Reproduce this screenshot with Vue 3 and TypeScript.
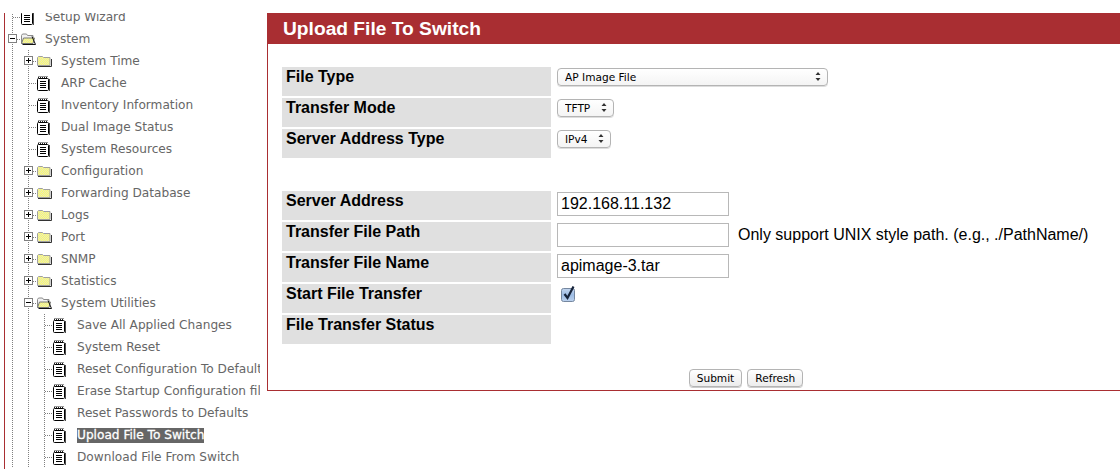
<script setup lang="ts">
interface Row { label: string; level: number; kind: 'open' | 'closed' | 'leaf'; active?: boolean }
const rows: Row[] = [
  { label: 'Setup Wizard', level: 0, kind: 'leaf' },
  { label: 'System', level: 0, kind: 'open' },
  { label: 'System Time', level: 1, kind: 'closed' },
  { label: 'ARP Cache', level: 1, kind: 'leaf' },
  { label: 'Inventory Information', level: 1, kind: 'leaf' },
  { label: 'Dual Image Status', level: 1, kind: 'leaf' },
  { label: 'System Resources', level: 1, kind: 'leaf' },
  { label: 'Configuration', level: 1, kind: 'closed' },
  { label: 'Forwarding Database', level: 1, kind: 'closed' },
  { label: 'Logs', level: 1, kind: 'closed' },
  { label: 'Port', level: 1, kind: 'closed' },
  { label: 'SNMP', level: 1, kind: 'closed' },
  { label: 'Statistics', level: 1, kind: 'closed' },
  { label: 'System Utilities', level: 1, kind: 'open' },
  { label: 'Save All Applied Changes', level: 2, kind: 'leaf' },
  { label: 'System Reset', level: 2, kind: 'leaf' },
  { label: 'Reset Configuration To Defaults', level: 2, kind: 'leaf' },
  { label: 'Erase Startup Configuration file', level: 2, kind: 'leaf' },
  { label: 'Reset Passwords to Defaults', level: 2, kind: 'leaf' },
  { label: 'Upload File To Switch', level: 2, kind: 'leaf', active: true },
  { label: 'Download File From Switch', level: 2, kind: 'leaf' },
]
const guides = (n: number) => Array.from({ length: n }, (_, i) => i)
</script>

<template>
  <div class="page">
    <svg class="defs" width="0" height="0" aria-hidden="true">
      <defs>
        <pattern id="dith" width="2" height="2" patternUnits="userSpaceOnUse">
          <rect width="2" height="2" fill="#ffff66" />
          <rect width="1" height="1" fill="#e4e4c4" />
          <rect x="1" y="1" width="1" height="1" fill="#e4e4c4" />
        </pattern>
        <linearGradient id="cb" x1="0" y1="0" x2="0" y2="1">
          <stop offset="0" stop-color="#c3d6ef" />
          <stop offset=".5" stop-color="#9dbce4" />
          <stop offset="1" stop-color="#bcd2ee" />
        </linearGradient>
      </defs>
    </svg>
    <nav class="tree">
      <div class="tree-inner">
        <div v-for="r in rows" :key="r.label" class="row">
          <span v-for="g in guides(r.level)" :key="g" class="cell guide"></span>
          <span class="cell connector">
            <span v-if="r.kind !== 'leaf'" class="box">
              <i class="h"></i><i v-if="r.kind === 'closed'" class="v"></i>
            </span>
          </span>
          <span class="icon">
            <svg v-if="r.kind === 'leaf'" width="16" height="18" viewBox="0 0 16 18">
              <path d="M1.500 2.500h9" stroke="#333" stroke-dasharray="1 1" />
              <path d="M1 3.500h10" stroke="#222" stroke-dasharray="1 1" />
              <rect x=".5" y="4.500" width="11" height="12" rx="1" fill="#fff" stroke="#000" />
              <path d="M3 7.500h6M3 9.500h6M3 11.500h6M3 13.500h6" stroke="#000" />
              <path d="M12.500 5v12" fill="none" stroke="#000" stroke-opacity=".7" />
            </svg>
            <svg v-else-if="r.kind === 'closed'" width="16" height="16" viewBox="0 0 16 16">
              <path d="M.5 12.500V4.500l1-1h4l1 1h6.500v8z" fill="url(#dith)" stroke="#a0a0a0" />
              <path d="M1 13.500h13.500V6" fill="none" stroke="#333" />
            </svg>
            <svg v-else width="16" height="16" viewBox="0 0 16 16">
              <path d="M.5 12.500V4.500l1-1.500h4l1 1.500h5.500v3" fill="#f2f2f2" stroke="#8a8a8a" />
              <path d="M.5 12.500l2-5.500h11l-1.500 5.500z" fill="url(#dith)" stroke="#777" />
              <path d="M11 5.500l3.500 8H1.500" fill="none" stroke="#111" />
            </svg>
          </span>
          <span class="text" :class="{ active: r.active }">{{ r.label }}</span>
        </div>
      </div>
    </nav>

    <main class="panel">
      <h1 class="title">Upload File To Switch</h1>
      <form class="form" @submit.prevent>
        <section class="group">
          <div class="line">
            <div class="label">File Type</div>
            <div class="value">
              <span class="select wide"><select><option>AP Image File</option></select>
                <svg class="arrows" width="6" height="9" viewBox="0 0 6 9"><path d="M3 0l2.500 3h-5zM3 9L.5 6h5z" fill="#333" /></svg></span>
            </div>
          </div>
          <div class="line">
            <div class="label">Transfer Mode</div>
            <div class="value">
              <span class="select tftp"><select><option>TFTP</option></select>
                <svg class="arrows" width="6" height="9" viewBox="0 0 6 9"><path d="M3 0l2.500 3h-5zM3 9L.5 6h5z" fill="#333" /></svg></span>
            </div>
          </div>
          <div class="line">
            <div class="label">Server Address Type</div>
            <div class="value">
              <span class="select ipv4"><select><option>IPv4</option></select>
                <svg class="arrows" width="6" height="9" viewBox="0 0 6 9"><path d="M3 0l2.500 3h-5zM3 9L.5 6h5z" fill="#333" /></svg></span>
            </div>
          </div>
        </section>
        <section class="group second">
          <div class="line">
            <div class="label">Server Address</div>
            <div class="value"><input class="field" value="192.168.11.132" /></div>
          </div>
          <div class="line">
            <div class="label">Transfer File Path</div>
            <div class="value"><input class="field" value="" /><span class="note">Only support UNIX style path. (e.g., ./PathName/)</span></div>
          </div>
          <div class="line">
            <div class="label">Transfer File Name</div>
            <div class="value"><input class="field" value="apimage-3.tar" /></div>
          </div>
          <div class="line">
            <div class="label">Start File Transfer</div>
            <div class="value">
              <span class="check">
                <svg width="16" height="16" viewBox="0 0 16 16">
                  <rect x=".5" y="2.500" width="13" height="13" rx="2" fill="url(#cb)" stroke="#75879f" />
                  <path d="M3.500 8l3 4L12.500 .5" fill="none" stroke="#16233a" stroke-width="2.200" />
                </svg>
              </span>
            </div>
          </div>
          <div class="line">
            <div class="label">File Transfer Status</div>
            <div class="value"></div>
          </div>
        </section>
        <div class="actions">
          <button type="submit" class="btn">Submit</button>
          <button type="button" class="btn">Refresh</button>
        </div>
      </form>
    </main>
  </div>
</template>

<style>
html, body { margin: 0; background: #fff; overflow: hidden; }
</style>

<style scoped>
.defs { position: absolute; }
.page {
  display: flex;
  height: 469px;
  padding-top: 13px;
  padding-left: 4px;
  box-sizing: border-box;
  overflow: hidden;
  align-items: flex-start;
}
.tree {
  width: 255px;
  height: 456px;
  flex: none;
  margin-right: 7px;
  border-left: 1px solid #a92e32;
  overflow: hidden;
  box-sizing: content-box;
}
.tree-inner { margin-top: -7px; }
.row {
  display: flex;
  align-items: center;
  height: 22px;
  white-space: nowrap;
}
.cell {
  width: 16px;
  height: 22px;
  flex: none;
  position: relative;
  background: repeating-linear-gradient(to bottom, #808080 0 1px, transparent 1px 2px) 7px 0 / 1px 100% no-repeat;
}
.connector::after {
  content: '';
  position: absolute;
  left: 8px;
  top: 11px;
  width: 8px;
  height: 1px;
  background: repeating-linear-gradient(to right, #808080 0 1px, transparent 1px 2px);
}
.box {
  position: absolute;
  z-index: 1;
  left: 3px;
  top: 6px;
  width: 7px;
  height: 7px;
  border: 1px solid #808080;
  background: #fff;
}
.box .h { position: absolute; left: 1px; top: 3px; width: 5px; height: 1px; background: #000; }
.box .v { position: absolute; left: 3px; top: 1px; width: 1px; height: 5px; background: #000; }
.icon { width: 16px; height: 18px; flex: none; display: flex; align-items: center; }
.icon svg { display: block; }
.text {
  margin-left: 8px;
  font: 12.150px/15px "DejaVu Sans", Verdana, sans-serif;
  color: #666;
}
.text.active { background: #666; color: #fff; -webkit-text-stroke: 0.3px #fff; }
.panel {
  flex: none;
  width: 900px;
  height: 378px;
  box-sizing: border-box;
  border-left: 1px solid #a92e32;
  border-bottom: 1px solid #a92e32;
}
.title {
  margin: 0;
  height: 31px;
  padding-left: 15px;
  background: #a92e32;
  color: #fff;
  font: 700 19.200px/31px "Liberation Sans", Arial, sans-serif;
}
.form { padding: 23px 0 0 14px; }
.group { display: flex; flex-direction: column; gap: 2px; }
.second { margin-top: 33px; }
.line { display: flex; height: 29px; }
.label {
  width: 265px;
  height: 29px;
  padding-left: 4px;
  background: #e0e0e0;
  font: 700 16px/19px "Liberation Sans", Arial, sans-serif;
  color: #000;
  flex: none;
}
.value {
  margin-left: 6px;
  display: flex;
  align-items: flex-start;
  font: 16px/19px "Liberation Sans", Arial, sans-serif;
  color: #000;
}
.select { position: relative; display: block; height: 19px; margin-top: 1px; }
.select select {
  appearance: none;
  display: block;
  width: 100%;
  height: 18px;
  margin: 0;
  padding: 0 0 0 7px;
  border: 1px solid #b4b4b4;
  border-radius: 4px;
  background: linear-gradient(#fff, #f4f4f4);
  box-shadow: 0 1px 0 #ddd;
  font: 10.600px "DejaVu Sans", Verdana, sans-serif;
  color: #000;
}
.wide { width: 271px; }
.tftp { width: 57px; }
.ipv4 { width: 54px; }
.arrows { position: absolute; right: 7px; top: 4px; }
.field {
  width: 172px;
  height: 24px;
  box-sizing: border-box;
  margin: 1px 0 0;
  padding: 0 3px;
  border: 1px solid #b8b8b8;
  border-radius: 0;
  font: 16px "Liberation Sans", Arial, sans-serif;
  color: #000;
  outline: none;
}
.note { margin-left: 9px; margin-top: 3px; }
.check { display: block; margin: 2px 0 0 4px; height: 18px; }
.check svg { display: block; }
.actions {
  display: flex;
  justify-content: center;
  gap: 5px;
  margin-top: 25px;
  width: 928px;
}
.btn {
  height: 18px;
  padding: 0 7px;
  border: 1px solid #b4b4b4;
  border-radius: 4px;
  background: linear-gradient(#fff, #ececec);
  box-shadow: 0 1px 0 #ccc;
  font: 10.600px "DejaVu Sans", Verdana, sans-serif;
  color: #000;
}
</style>
